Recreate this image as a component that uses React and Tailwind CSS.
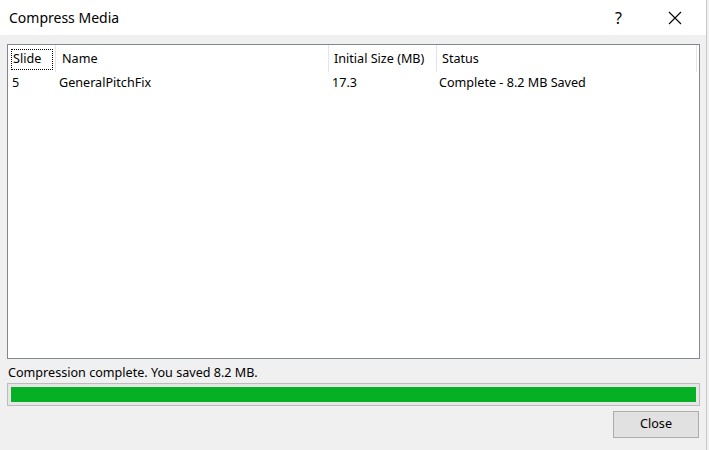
const rows = [
  { slide: "5", name: "GeneralPitchFix", size: "17.3", status: "Complete - 8.2 MB Saved" },
];

const App = () => {
  return (
    <div
      className="w-[709px] h-[450px] flex bg-[#f0f0f0] text-[#000] overflow-hidden"
      style={{ fontFamily: '"Noto Sans", "Open Sans", sans-serif' }}
    >
      <div className="w-[707px] h-full flex flex-col border-r border-[#c9c9c9]">
        {/* title bar */}
        <div className="h-[35px] bg-white flex items-center shrink-0">
          <span className="ml-[9px] text-[14px] text-[#000] leading-none">Compress Media</span>
          <span className="ml-auto mr-[46px] text-[16px] leading-none">?</span>
          <svg width="14" height="14" viewBox="0 0 14 14" className="mr-[24px]">
            <path d="M1 1 L13 13 M13 1 L1 13" stroke="#000" strokeWidth="1.1" />
          </svg>
        </div>

        {/* list */}
        <div className="mt-[9px] ml-[7px] w-[693px] h-[315px] bg-white border border-[#828790] shrink-0 text-[12.6px]">
          <div className="flex h-[27px] items-stretch">
            <div className="w-[48px] border-r border-[#e5e5e5] flex items-center pl-[3px] pr-[2px] pt-[2px]">
              <span className="border border-dotted border-[#000] h-[21px] w-[42px] flex items-center pl-[1px]">Slide</span>
            </div>
            <div className="w-[273px] border-r border-[#e5e5e5] flex items-center pl-[6px] pt-[2px]">Name</div>
            <div className="w-[108px] border-r border-[#e5e5e5] flex items-center pl-[5px] pt-[2px]">Initial Size (MB)</div>
            <div className="w-[260px] border-r border-[#e5e5e5] flex items-center pl-[5px] pt-[2px]">Status</div>
          </div>
          {rows.map((r) => (
            <div key={r.slide} className="flex h-[22px] items-center">
              <div className="w-[48px] pl-[4px]">{r.slide}</div>
              <div className="w-[273px] pl-[3px]">{r.name}</div>
              <div className="w-[108px] pl-[3px]">{r.size}</div>
              <div className="w-[260px] pl-[2px]">{r.status}</div>
            </div>
          ))}
        </div>

        {/* status */}
        <div className="ml-[8px] mt-[4px] h-[20px] flex items-center text-[12.6px]">
          Compression complete. You saved 8.2 MB.
        </div>
        <div className="ml-[7px] w-[693px] h-[23px] border border-[#bcbcbc] bg-[#e6e6e6] p-[3px] shrink-0">
          <div className="h-full bg-[#06b025]" />
        </div>

        <div className="flex justify-end mt-[5px] mr-[7px]">
          <button className="w-[86px] h-[27px] bg-[#e1e1e1] border border-[#adadad] text-[12.6px]">
            Close
          </button>
        </div>
      </div>
    </div>
  );
};

export default App;
